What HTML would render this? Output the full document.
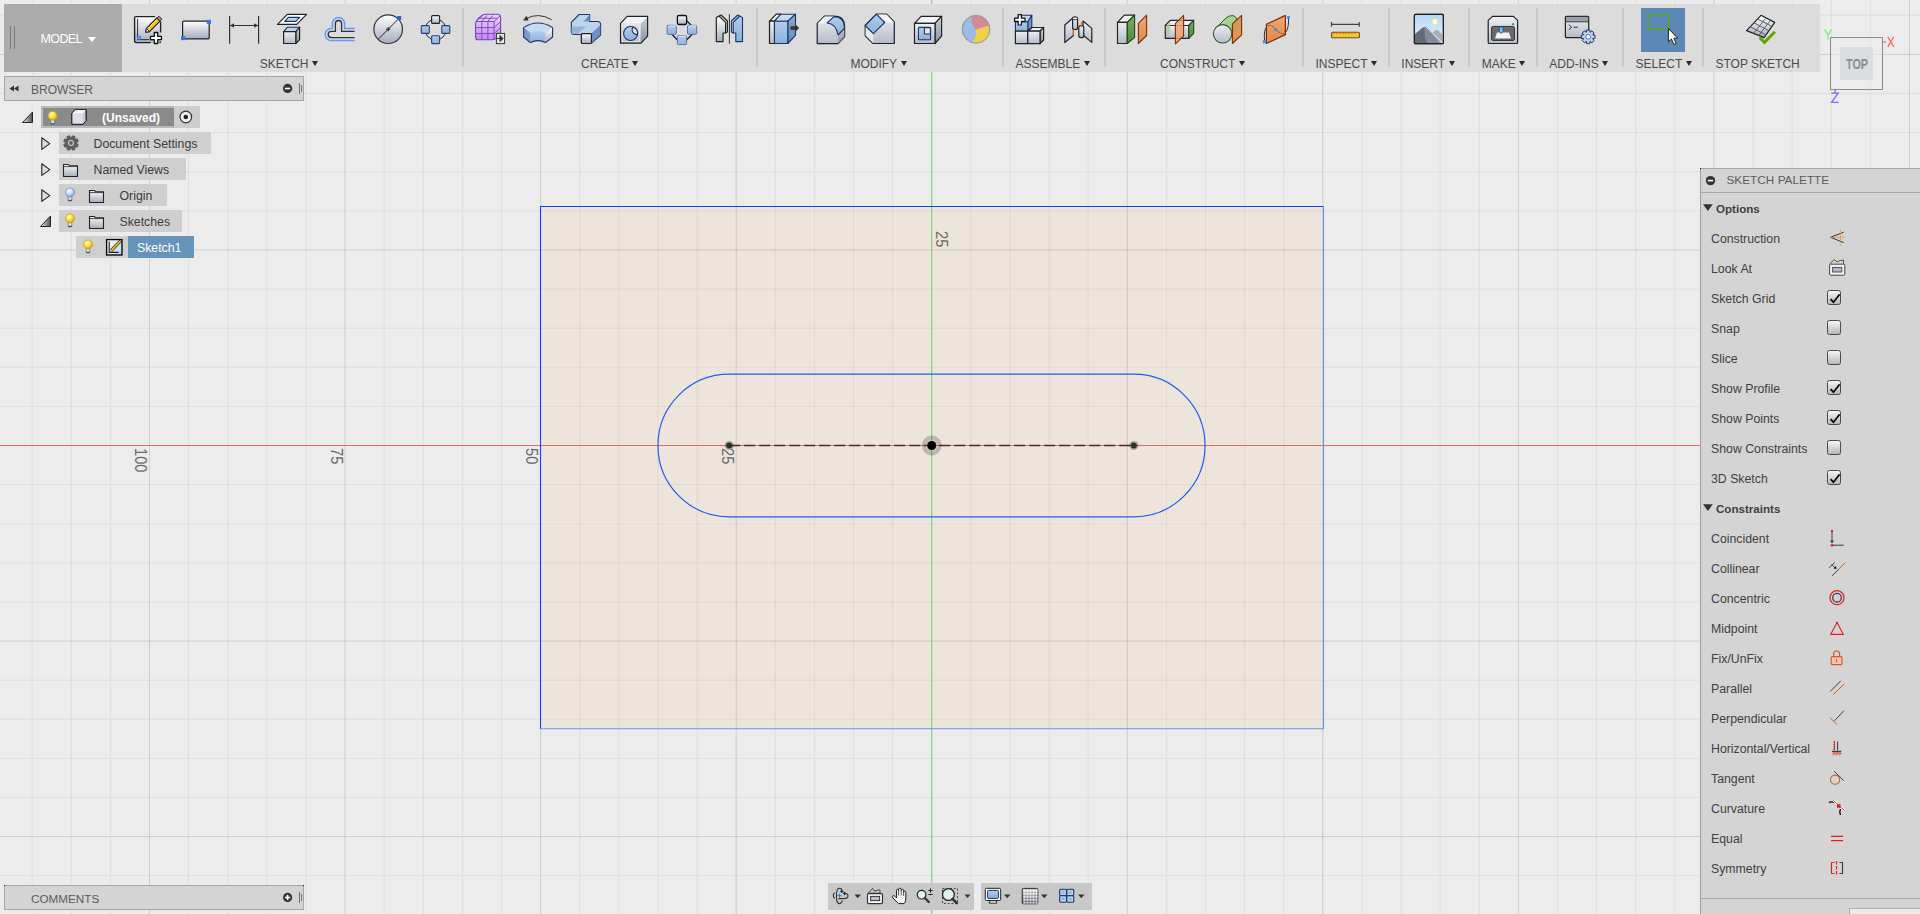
<!DOCTYPE html><html><head><meta charset="utf-8"><style>
*{box-sizing:border-box}
body{margin:0;width:1920px;height:914px;overflow:hidden;background:#ececec;position:relative;font-family:"Liberation Sans",sans-serif;}
.a{position:absolute}
.lbl{transform-origin:0 0;transform:rotate(90deg) scaleX(0.86);font-size:17px;line-height:17px;color:#6a6a6a;white-space:nowrap}
.tb{left:4px;top:4px;width:1816px;height:68px;background:#dcdcdc}
.model{left:4px;top:4px;width:118px;height:68px;background:#acacac}
.sep{width:2px;background:#c8c8c8;top:8px;height:59px}
.glab{font-size:12px;color:#4a4a4a;white-space:nowrap;top:57px;line-height:14px}
.tri{display:inline-block;width:0;height:0;border-left:3.7px solid transparent;border-right:3.7px solid transparent;border-top:5.2px solid #2a2a2a;vertical-align:2.4px;margin-left:3.6px}
.hdr{background:#d4d4d4;border:1px solid #a6a6a6}
.row{background:#cfcfcf;height:22px}
.rt{font-size:12px;color:#3c3c3c;white-space:nowrap;line-height:14px}
.pal{left:1700px;top:168px;width:220px;height:746px;background:#d4d4d4;border-left:1px solid #a0a0a0;border-top:1px solid #a6a6a6}
.pt{font-size:12.3px;color:#404040;white-space:nowrap;line-height:14px;left:1711px}
.cb{left:1827px;width:14px;height:14.5px;border:1px solid #4a4a4a;border-radius:2.5px;background:linear-gradient(#f6f6f6,#b8b8b8)}
.nav{background:#c8c8c8;top:883px;height:27px}
</style></head><body>
<svg class="a" style="left:0;top:0" width="1920" height="914"><rect x="0" y="0" width="1920" height="914" fill="#ececec"/>
<rect x="540.5" y="206.5" width="783" height="522" fill="#ede5db"/>
<path d="M32.17 0V914 M71.28 0V914 M110.39 0V914 M188.61 0V914 M227.72 0V914 M266.83 0V914 M305.94 0V914 M384.16 0V914 M423.27 0V914 M462.38 0V914 M501.49 0V914 M0 15.29H1920 M579.71 0V914 M0 93.51H1920 M618.82 0V914 M0 132.62H1920 M657.93 0V914 M0 171.73H1920 M697.04 0V914 M0 210.84H1920 M775.26 0V914 M0 289.06H1920 M814.37 0V914 M0 328.17H1920 M853.48 0V914 M0 367.28H1920 M892.59 0V914 M0 406.39H1920 M970.81 0V914 M0 484.61H1920 M1009.92 0V914 M0 523.72H1920 M1049.03 0V914 M0 562.83H1920 M1088.14 0V914 M0 601.94H1920 M1166.36 0V914 M0 680.16H1920 M1205.47 0V914 M0 719.27H1920 M1244.58 0V914 M0 758.38H1920 M1283.69 0V914 M0 797.49H1920 M1361.91 0V914 M0 875.71H1920 M1401.02 0V914 M0 914.82H1920 M1440.13 0V914 M1479.24 0V914 M1557.46 0V914 M1596.57 0V914 M1635.68 0V914 M1674.79 0V914 M1753.01 0V914 M1792.12 0V914 M1831.23 0V914 M1870.34 0V914" stroke="#000" stroke-opacity="0.055" stroke-width="1" fill="none"/>
<path d="M149.50 0V914 M345.05 0V914 M540.60 0V914 M0 54.40H1920 M736.15 0V914 M0 249.95H1920 M931.70 0V914 M0 445.50H1920 M1127.25 0V914 M0 641.05H1920 M1322.80 0V914 M0 836.60H1920 M1518.35 0V914 M1713.90 0V914 M1909.45 0V914" stroke="#000" stroke-opacity="0.13" stroke-width="1" fill="none"/>
<path d="M0 445.5H1920" stroke="#e86868" stroke-width="1" fill="none"/>
<path d="M931.7 0V914" stroke="#70dc69" stroke-width="1" fill="none"/>
<path d="M1323.5 206.5V728.8H540.5" fill="none" stroke="#6494f4" stroke-width="1.1"/>
<path d="M540.5 728.8V206.5H1323.5" fill="none" stroke="#0a46ff" stroke-width="1.1"/>
<path d="M729.2 374.2H1133.8A71.3 71.3 0 0 1 1133.8 516.8H729.2A71.3 71.3 0 0 1 729.2 374.2Z" fill="none" stroke="#1e5cf5" stroke-width="1.2"/>
<path d="M729.2 445.5H1133.8" stroke="#4a2a22" stroke-width="1.6" stroke-dasharray="11 4" fill="none"/>
<circle cx="729.2" cy="445.5" r="4.6" fill="#000" fill-opacity="0.28"/><circle cx="729.2" cy="445.5" r="3" fill="#303030"/>
<circle cx="1133.8" cy="445.5" r="4.6" fill="#000" fill-opacity="0.28"/><circle cx="1133.8" cy="445.5" r="3" fill="#303030"/>
<circle cx="931.7" cy="445.5" r="10" fill="#000" fill-opacity="0.2"/><circle cx="931.7" cy="445.5" r="6" fill="#fff" fill-opacity="0.2"/><circle cx="931.7" cy="445.5" r="4.5" fill="#000"/></svg>
<div class="a lbl" style="left:149px;top:448px">100</div>
<div class="a lbl" style="left:344.5px;top:448px">75</div>
<div class="a lbl" style="left:540px;top:448px">50</div>
<div class="a lbl" style="left:735.5px;top:448px">25</div>
<div class="a lbl" style="left:950px;top:230.5px">25</div>
<div class="a tb"></div>
<div class="a model"><div class="a" style="left:6px;top:22px;width:1px;height:23px;background:#7c7c7c"></div><div class="a" style="left:10px;top:22px;width:1px;height:23px;background:#7c7c7c"></div><div class="a" style="left:36.5px;top:28px;font-size:12.5px;letter-spacing:-0.6px;color:#fff;line-height:14px">MODEL</div><div class="a tri" style="left:83.5px;top:32.5px;margin:0;border-top-color:#fff;border-left-width:4px;border-right-width:4px;border-top-width:5.5px"></div></div>
<div class="a sep" style="left:462px"></div>
<div class="a sep" style="left:756px"></div>
<div class="a sep" style="left:1002px"></div>
<div class="a sep" style="left:1104px"></div>
<div class="a sep" style="left:1302px"></div>
<div class="a sep" style="left:1388px"></div>
<div class="a sep" style="left:1468px"></div>
<div class="a sep" style="left:1536px"></div>
<div class="a sep" style="left:1622px"></div>
<div class="a sep" style="left:1702px"></div>
<div class="a glab" style="left:259.8px">SKETCH<span class="tri"></span></div>
<div class="a glab" style="left:581.0px">CREATE<span class="tri"></span></div>
<div class="a glab" style="left:850.4px">MODIFY<span class="tri"></span></div>
<div class="a glab" style="left:1015.5px">ASSEMBLE<span class="tri"></span></div>
<div class="a glab" style="left:1160.0px">CONSTRUCT<span class="tri"></span></div>
<div class="a glab" style="left:1315.5px">INSPECT<span class="tri"></span></div>
<div class="a glab" style="left:1401.3px">INSERT<span class="tri"></span></div>
<div class="a glab" style="left:1481.8px">MAKE<span class="tri"></span></div>
<div class="a glab" style="left:1549.3px">ADD-INS<span class="tri"></span></div>
<div class="a glab" style="left:1635.6px">SELECT<span class="tri"></span></div>
<div class="a glab" style="left:1715.5px">STOP SKETCH</div>
<div class="a" style="left:1641px;top:8px;width:44px;height:44px;background:#5b88b4"></div>
<svg class="a" style="left:0;top:0" width="1920" height="80"><defs>
<linearGradient id="gw" x1="0" y1="0" x2="0" y2="1"><stop offset="0" stop-color="#ffffff"/><stop offset="1" stop-color="#a4acbc"/></linearGradient>
<linearGradient id="gw2" x1="0" y1="0" x2="0" y2="1"><stop offset="0" stop-color="#eef0f4"/><stop offset="1" stop-color="#b4bac8"/></linearGradient>
<linearGradient id="gside" x1="0" y1="0" x2="0" y2="1"><stop offset="0" stop-color="#c8ccd4"/><stop offset="1" stop-color="#8a94a4"/></linearGradient>
<linearGradient id="gblue" x1="0" y1="0" x2="0" y2="1"><stop offset="0" stop-color="#b4cdec"/><stop offset="1" stop-color="#8cb0dc"/></linearGradient>
<linearGradient id="gbluedk" x1="0" y1="0" x2="0" y2="1"><stop offset="0" stop-color="#8aa8d4"/><stop offset="1" stop-color="#6a8cc0"/></linearGradient>
<linearGradient id="gpur" x1="0" y1="0" x2="0" y2="1"><stop offset="0" stop-color="#ead8f8"/><stop offset="1" stop-color="#c488f0"/></linearGradient>
<linearGradient id="ggreen" x1="0" y1="0" x2="0" y2="1"><stop offset="0" stop-color="#7ab060"/><stop offset="1" stop-color="#4a8a38"/></linearGradient>
<linearGradient id="gorange" x1="0" y1="0" x2="0" y2="1"><stop offset="0" stop-color="#f0a870"/><stop offset="1" stop-color="#e0884a"/></linearGradient>
<linearGradient id="gsky" x1="0" y1="0" x2="0" y2="1"><stop offset="0" stop-color="#b4d8f2"/><stop offset="1" stop-color="#eaf6fc"/></linearGradient>
<linearGradient id="gdk" x1="0" y1="0" x2="0" y2="1"><stop offset="0" stop-color="#b8b8b8"/><stop offset="1" stop-color="#5a6270"/></linearGradient>
<linearGradient id="gcb" x1="0" y1="0" x2="0" y2="1"><stop offset="0" stop-color="#f4f4f4"/><stop offset="1" stop-color="#c0c0c0"/></linearGradient>
<radialGradient id="gbulb" cx="0.4" cy="0.35" r="0.6"><stop offset="0" stop-color="#fffbd0"/><stop offset="0.6" stop-color="#f8e040"/><stop offset="1" stop-color="#d8b010"/></radialGradient>
<radialGradient id="gbulbb" cx="0.4" cy="0.35" r="0.6"><stop offset="0" stop-color="#ffffff"/><stop offset="0.6" stop-color="#c4d8f8"/><stop offset="1" stop-color="#8aacdc"/></radialGradient>
<linearGradient id="gtri" x1="0" y1="0" x2="1" y2="0"><stop offset="0" stop-color="#f0f0f0"/><stop offset="1" stop-color="#505050"/></linearGradient>
</defs><rect x="134.6" y="16.6" width="26" height="26" rx="1.5" fill="url(#gw)"/><path d="M155.2 16.6H136.1Q134.6 16.6 134.6 18.1V41.1Q134.6 42.6 136.1 42.6H150.8M160.6 21.6V32.6M159.4 42.6Q160.6 42.6 160.6 41.4" stroke="#222" stroke-width="1.4" fill="none"/><path d="M137.6 19V39.6H149" stroke="#333" stroke-width="1" fill="none"/><rect x="137.2" y="36.2" width="3.4" height="3.4" fill="#5aa0ff" stroke="#2a6ac0" stroke-width="0.6"/><path d="M146.4 28.4L156.8 18L160 21.2L149.6 31.6L145.8 32.2Z" fill="#f7c400" stroke="#1a1a1a" stroke-width="1.1" stroke-linejoin="round"/><path d="M147.8 28.6L157.6 18.8" stroke="#fff6c0" stroke-width="0.8"/><path d="M156.8 18L158.2 16.6Q158.8 16 159.4 16.6L161.4 18.6Q162 19.2 161.4 19.8L160 21.2Z" fill="#d08050" stroke="#1a1a1a" stroke-width="0.9"/><path d="M146.4 28.4L149.6 31.6L145.8 32.2Z" fill="#fff" stroke="#1a1a1a" stroke-width="0.9" stroke-linejoin="round"/><path d="M154.3 32.5h3.4v3.8h3.8v3.4h-3.8v3.8h-3.4v-3.8h-3.8v-3.4h3.8z" fill="#fff" stroke="#111" stroke-width="1.3" stroke-linejoin="round"/><rect x="182.6" y="21.2" width="26.6" height="17.6" rx="1" fill="url(#gw)" stroke="#222" stroke-width="1.2" stroke-linejoin="round" stroke-width="1.4"/><rect x="206.8" y="19.8" width="4.2" height="4.2" fill="#3a78e0"/><rect x="181" y="36" width="4.2" height="4.2" fill="#3a78e0"/><path d="M229.6 16V43.8M258.6 16V43.8M230 25.5H258" stroke="#333" stroke-width="1.2" fill="none"/><path d="M230 25.5L234 23.2V27.8ZM258.2 25.5L254.2 23.2V27.8Z" fill="#333"/><path d="M277.5 24.4L287.3 14.4H306.6L296.7 24.4Z" fill="#fff" stroke="#222" stroke-width="1.2" stroke-linejoin="round"/><path d="M284.7 21.4L288.4 17.4H299.6L295.8 21.4Z" fill="#bcd4ee" stroke="#1a3468" stroke-width="1.1" stroke-linejoin="round"/><path d="M283.6 31.7L287.3 27.3H299.6L295.8 31.7Z" fill="#bcd4ee" stroke="#1a3468" stroke-width="1.1" stroke-linejoin="round"/><path d="M295.8 31.7L299.6 27.3V39.7L295.8 43.5Z" fill="url(#gside)" stroke="#222" stroke-width="1.2" stroke-linejoin="round"/><rect x="283.6" y="31.7" width="12.2" height="11.8" fill="url(#gw2)" stroke="#222" stroke-width="1.2" stroke-linejoin="round"/><path d="M354.7 28.6H344.6V23.6A6.1 6.1 0 0 0 332.4 23.6V28.4H331.3A6.1 6.1 0 0 0 331.3 40.6H354.7" stroke="#5a9cff" stroke-width="1.5" fill="none"/><path d="M354.7 31.4H341.6V23.6A3.1 3.1 0 0 0 335.4 23.6V31.4H331.3A3.1 3.1 0 0 0 331.3 37.6H354.7" stroke="#333" stroke-width="1.3" fill="none"/><circle cx="388.2" cy="29.2" r="14.3" fill="url(#gw)" stroke="#333" stroke-width="1.2"/><path d="M378 39.4L399 18.4M386 29.2h4.4M388.2 27v4.4" stroke="#222" stroke-width="1" fill="none"/><rect x="397.2" y="16" width="4" height="4" fill="#2a60d8"/><circle cx="435.6" cy="29.6" r="10.5" fill="none" stroke="#333" stroke-width="1"/><rect x="431.6" y="15.6" width="8" height="7.8" rx="1" fill="url(#gw)" stroke="#223" stroke-width="1.1"/><rect x="421.3" y="25.6" width="8" height="7.8" rx="1" fill="url(#gblue)" stroke="#23407a" stroke-width="1.1"/><rect x="441.8" y="25.6" width="8" height="7.8" rx="1" fill="url(#gblue)" stroke="#23407a" stroke-width="1.1"/><rect x="431.6" y="35.8" width="8" height="7.8" rx="1" fill="url(#gblue)" stroke="#23407a" stroke-width="1.1"/><path d="M478 39.8Q475.6 39.8 475.6 37V24Q475.6 21.5 478 19L482 15.5Q483.5 14.2 486 14.2H497Q500.6 14.2 500.6 18V31.5Q500.6 34 498 36.5L496 38.5Q494.8 39.8 492.5 39.8Z" fill="url(#gpur)" stroke="#7a3ec0" stroke-width="1.1"/><path d="M475.8 21.5H494V39.6M494 21.5L500.4 15.5M481.8 21.5V39.6M487.9 21.5V39.6M475.8 27.6H494M475.8 33.6H494M481.5 21.5L487 15.5M487.6 21.5L493 15.5M478 18.2H497.5M494 27.6L500.4 21.8M494 33.6L500.4 28" stroke="#7a3ec0" stroke-width="0.9" fill="none"/><rect x="496.4" y="33.4" width="8.2" height="10.2" fill="#e8e8e8" stroke="#333" stroke-width="1"/><path d="M497 38.5H500.5M500 35.5L503 38.5L500 41.5Z" stroke="#333" stroke-width="1" fill="#333"/><path d="M551.6 19.6Q538 12 526.5 18.6" stroke="#333" stroke-width="1" fill="none"/><path d="M523 20.6L526.5 15.8L528.6 20.6Z" fill="#333"/><path d="M523.6 27.6Q538 18.5 552.6 27.6L545.6 33Q538 29 530.4 33Z" fill="#c8dcf0"/><path d="M530.4 33Q538 29 545.6 33V42.6Q538 38.6 530.4 42.6Z" fill="url(#gblue)"/><path d="M523.6 27.6L530.4 33V42.6L523.6 37Z" fill="#7c9ccc"/><path d="M545.6 33L552.6 27.6V37L545.6 42.6Z" fill="url(#gw)"/><path d="M523.6 27.6Q538 18.5 552.6 27.6V37L545.6 42.6Q538 38.6 530.4 42.6L523.6 37Z" fill="none" stroke="#1a3468" stroke-width="1.1" stroke-linejoin="round" stroke-width="1.2"/><path d="M579.1 14.5H589.6V21.5H597.5Q600.6 21.5 600.6 24.5V35L591.8 42.8H581.4V34.5H574.6Q571.3 34.5 571.3 31.5V22.3Z" fill="#bcd4ee" stroke="#1a3468" stroke-width="1.1" stroke-linejoin="round" stroke-width="1.2"/><path d="M589.6 14.8V21.5H583.5Z" fill="#6f90c4"/><path d="M600.3 25L591.4 33.6V42.6L600.3 35Z" fill="#6f90c4"/><path d="M571.6 26.5H586L578 33.8H571.6Z" fill="#94b4dc"/><rect x="581.4" y="33.6" width="10" height="9.9" rx="0.8" fill="url(#gw)" stroke="#222" stroke-width="1.2" stroke-linejoin="round"/><path d="M620.5 23.3L627.2 16.3H647.6V36.2L641 43.2H620.5Z" fill="url(#gw2)"/><path d="M621 23.3L627.5 16.8H647L640.8 23.3Z" fill="#f3f4f7"/><path d="M641 23.5L647.2 17V36L641 42.8Z" fill="url(#gside)"/><rect x="622.2" y="24.9" width="17.2" height="16.8" fill="none" stroke="#e6e9ef" stroke-width="0.9"/><path d="M620.5 23.3L627.2 16.3H647.6V36.2L641 43.2H620.5Z" fill="none" stroke="#222" stroke-width="1.2" stroke-linejoin="round" stroke-width="1.3"/><circle cx="630.6" cy="33.5" r="7" fill="url(#gblue)" stroke="#1a3468" stroke-width="1.1" stroke-linejoin="round" stroke-width="1"/><path d="M633.2 27A7 7 0 0 1 637.5 34.6Q633.6 34.6 632.2 31Q631.6 28.4 633.2 27Z" fill="#e6e4e0" stroke="#1a3468" stroke-width="1.1" stroke-linejoin="round" stroke-width="0.9"/><path d="M685.5 19.5L692.5 26.5M671.5 34L678.5 41M692.5 34L685.5 41" stroke="#1a1a1a" stroke-width="1.3" fill="none"/><rect x="677.4" y="15.5" width="9.2" height="9" rx="1.4" fill="url(#gw)" stroke="#111" stroke-width="1.3"/><rect x="667.1" y="25.3" width="9.2" height="9" rx="1" fill="url(#gblue)" stroke="#5676a8" stroke-width="1"/><path d="M668.1 26.900000000000002L669.7 25.900000000000002H675.7" stroke="#e4eef8" stroke-width="1" fill="none"/><rect x="687.5" y="25.3" width="9.2" height="9" rx="1" fill="url(#gblue)" stroke="#5676a8" stroke-width="1"/><path d="M688.5 26.900000000000002L690.1 25.900000000000002H696.1" stroke="#e4eef8" stroke-width="1" fill="none"/><rect x="677.4" y="35.6" width="9.2" height="9" rx="1" fill="url(#gblue)" stroke="#5676a8" stroke-width="1"/><path d="M678.4 37.2L680.0 36.2H686.0" stroke="#e4eef8" stroke-width="1" fill="none"/><path d="M729.4 14.2V43.7" stroke="#333" stroke-width="1" fill="none"/><path d="M719 16L721 15L727.4 21V32L725 33" fill="#e4e7ee" stroke="#222" stroke-width="1.2" stroke-linejoin="round" stroke-width="1"/><path d="M716.3 17.6L719 16L725.6 22.4V33H723V41.6H716.3Z" fill="url(#gw)" stroke="#222" stroke-width="1.2" stroke-linejoin="round" stroke-width="1.1"/><path d="M739.8 16L737.8 15L731.4 21V32L733.6 33" fill="#c4d8f0" stroke="#1a3468" stroke-width="1.1" stroke-linejoin="round" stroke-width="1"/><path d="M742.5 17.6L739.8 16L733.2 22.4V33H735.8V41.6H742.5Z" fill="url(#gblue)" stroke="#1a3468" stroke-width="1.1" stroke-linejoin="round"/><path d="M769.5 21.2L776.2 14.2H781L774.5 21.2Z" fill="#f4f4f6" stroke="#222" stroke-width="1.2" stroke-linejoin="round"/><rect x="769.5" y="21.2" width="5" height="22.3" fill="url(#gw2)" stroke="#222" stroke-width="1.2" stroke-linejoin="round"/><path d="M774.5 21.2L780.8 14.2H795.5L787.8 21.2Z" fill="#c8dcf0" stroke="#1a3468" stroke-width="1.1" stroke-linejoin="round" stroke-width="1.2"/><path d="M787.8 21.2L795.5 14.2V35.4L787.8 43.5Z" fill="url(#gbluedk)" stroke="#1a3468" stroke-width="1.1" stroke-linejoin="round" stroke-width="1.2"/><rect x="774.5" y="21.2" width="13.3" height="22.3" fill="url(#gblue)" stroke="#1a3468" stroke-width="1.1" stroke-linejoin="round" stroke-width="1.2"/><path d="M790.6 26.2H795V23.9L799.2 28L795 32V29.7H790.6Z" fill="#333"/><path d="M817.2 23.4L824.4 16.2H834Q844.6 16.2 844.6 27V36.6L838 43.6H817.2Z" fill="url(#gw2)" stroke="#222" stroke-width="1.2" stroke-linejoin="round" stroke-width="1.3"/><path d="M817.6 23.4L824.6 16.6H834L827 23.4Z" fill="#f3f4f6"/><path d="M838 35L844.3 28.5V36.6L838 43.3Z" fill="url(#gside)"/><path d="M827 23Q836 23.5 838 35L844.3 28.5V27Q844 16.6 834 16.6Z" fill="url(#gblue)" stroke="#1a3468" stroke-width="1.1" stroke-linejoin="round" stroke-width="1.1"/><path d="M865.2 25.5L876.4 14.2H886.7L894.3 21.8V43.5H873.1L865.2 35.8Z" fill="url(#gw2)" stroke="#222" stroke-width="1.2" stroke-linejoin="round" stroke-width="1.3"/><path d="M876.4 14.6H886.5L893.8 22.2H884.7Z" fill="#f3f4f6"/><path d="M865.6 26L873.3 33.8V43.2L865.6 35.6Z" fill="#e6e8ee"/><path d="M865.2 25.5L876.4 14.2L884.7 22.5L873.3 33.7Z" fill="url(#gblue)" stroke="#1a3468" stroke-width="1.1" stroke-linejoin="round"/><path d="M914.5 23.3L921.2 16.3H941.6L935 23.3Z" fill="#f2f3f6" stroke="#222" stroke-width="1.2" stroke-linejoin="round"/><path d="M935 23.3L941.6 16.3V36.2L935 43.5Z" fill="url(#gside)" stroke="#222" stroke-width="1.2" stroke-linejoin="round"/><rect x="914.5" y="23.3" width="20.5" height="20.2" fill="url(#gw2)" stroke="#222" stroke-width="1.2" stroke-linejoin="round"/><rect x="918.4" y="27.4" width="12.2" height="12.3" rx="1" fill="url(#gblue)" stroke="#1a3468" stroke-width="1.1" stroke-linejoin="round" stroke-width="1.2"/><path d="M924.4 27.6V34H930.4V27.6Z" fill="#e6e4e0" stroke="#1a3468" stroke-width="1.1" stroke-linejoin="round"/><circle cx="976" cy="29.3" r="13.8" fill="#9cbce8" stroke="#9a9a9a" stroke-width="1"/><path d="M971.7 15.8A13.8 13.8 0 0 1 989.4 25.6L975.6 29.7Q970 22 971.7 15.8Z" fill="#d68a96"/><path d="M975.6 29.7L989.4 25.6A13.8 13.8 0 0 1 971.8 42.5Q978 36 975.6 29.7Z" fill="#f0d248"/><circle cx="976" cy="29.3" r="13.8" fill="none" stroke="#9a9a9a" stroke-width="1"/><path d="M1015.4 22L1019.2 15.2H1031.8L1027.8 22Z" fill="#c8dcf0" stroke="#1a3468" stroke-width="1.1" stroke-linejoin="round"/><path d="M1027.8 22L1031.8 15.2V27.5L1027.8 31.2Z" fill="url(#gbluedk)" stroke="#1a3468" stroke-width="1.1" stroke-linejoin="round"/><rect x="1015.4" y="22" width="12.4" height="9.2" fill="url(#gblue)" stroke="#1a3468" stroke-width="1.1" stroke-linejoin="round"/><path d="M1028 31.2L1032 27.5H1043.6L1040 31.2Z" fill="#f0f1f4" stroke="#222" stroke-width="1.2" stroke-linejoin="round"/><path d="M1040 31.2L1043.6 27.5V40L1040 43.7Z" fill="url(#gside)" stroke="#222" stroke-width="1.2" stroke-linejoin="round"/><rect x="1015.4" y="31.2" width="12.4" height="12.5" fill="url(#gw2)" stroke="#222" stroke-width="1.2" stroke-linejoin="round"/><rect x="1027.8" y="31.2" width="12.2" height="12.5" fill="url(#gw2)" stroke="#222" stroke-width="1.2" stroke-linejoin="round"/><path d="M1018.2 14.6h3.2v3.6h3.6v3.2h-3.6v3.6h-3.2v-3.6h-3.6v-3.2h3.6z" fill="#fff" stroke="#111" stroke-width="1.2"/><path d="M1064.8 25L1073.4 17.5V35.5L1064.8 42.5Z" fill="url(#gw2)" stroke="#222" stroke-width="1.2" stroke-linejoin="round" stroke-width="1.1"/><rect x="1072.6" y="17" width="5" height="12.5" rx="2" fill="url(#gw2)" stroke="#222" stroke-width="1.2" stroke-linejoin="round" stroke-width="1"/><ellipse cx="1075.1" cy="18.4" rx="2.5" ry="1.4" fill="#fff" stroke="#222" stroke-width="0.8"/><path d="M1083 21L1091.8 28.4V42.4L1083 35Z" fill="url(#gw2)" stroke="#222" stroke-width="1.2" stroke-linejoin="round" stroke-width="1.1"/><rect x="1078.8" y="25.6" width="5" height="12" rx="2" fill="url(#gw2)" stroke="#222" stroke-width="1.2" stroke-linejoin="round" stroke-width="1"/><path d="M1073.6 29.5V35.2M1081.4 21.6V27.4" stroke="#f07010" stroke-width="1" fill="none"/><path d="M1117.5 22.4L1124.3 15.2H1134.6L1127.3 22.4Z" fill="#f4f4f6" stroke="#222" stroke-width="1.2" stroke-linejoin="round"/><rect x="1117.5" y="22.4" width="9.8" height="21.1" fill="url(#gw2)" stroke="#222" stroke-width="1.2" stroke-linejoin="round"/><path d="M1127.3 22.4L1134.6 15.2V37.4L1127.3 43.5Z" fill="url(#ggreen)" stroke="#1e4a1a" stroke-width="1.1" stroke-linejoin="round"/><path d="M1138.4 23.4L1146.6 15.2V35.5L1138.4 43.5Z" fill="url(#gorange)" stroke="#7a2e08" stroke-width="1.1" stroke-linejoin="round"/><path d="M1165.3 25.5L1170.2 20.3H1193.7L1188.8 25.5Z" fill="#f4f4f6" stroke="#222" stroke-width="1.2" stroke-linejoin="round"/><rect x="1165.3" y="25.5" width="23.5" height="12.9" fill="url(#gw2)" stroke="#222" stroke-width="1.2" stroke-linejoin="round"/><path d="M1165.8 26L1170.2 21.2V33.2L1166 37.8Z" fill="#a8cc98" opacity="0.8"/><path d="M1188.8 25.5L1193.7 20.3V33.3L1188.8 38.4Z" fill="url(#ggreen)" stroke="#1e4a1a" stroke-width="1.1" stroke-linejoin="round"/><path d="M1175.4 23.4L1183.6 15.4V35.8L1175.4 43.8Z" fill="#eca070" fill-opacity="0.85" stroke="#7a2e08" stroke-width="1.1" stroke-linejoin="round"/><path d="M1216.5 27.5L1226 18Q1229.5 15 1233 15.6Q1238 16.5 1236 24L1230 38Q1225 43.6 1218 41Z" fill="#a8d090" stroke="#2a6020" stroke-width="1"/><circle cx="1222.6" cy="33.8" r="9.2" fill="url(#gw2)" stroke="#2a6020" stroke-width="1.1"/><path d="M1232.4 24L1241.6 15.4V34.8L1232.4 43.5Z" fill="url(#gorange)" stroke="#7a2e08" stroke-width="1.1" stroke-linejoin="round"/><path d="M1233 24.2L1241 17V27L1233 34.5Z" fill="#c89858" opacity="0.8"/><path d="M1264.5 40.5Q1263.5 30 1267 26.5M1288.5 18.5Q1289 28 1285.5 32.5" stroke="#333" stroke-width="1" fill="none"/><path d="M1266.4 24.3L1285.4 15.4V34.6L1266.4 43.5Z" fill="url(#gorange)" stroke="#7a2e08" stroke-width="1.2" stroke-linejoin="round"/><path d="M1267.5 25.5Q1272 24.5 1275.5 29Q1280 34 1285 34" stroke="#333" stroke-width="0.8" stroke-dasharray="1.5 0.8" fill="none"/><rect x="1262.9" y="40" width="3.2" height="3.4" fill="#4a90f0"/><rect x="1287" y="15.9" width="3" height="3" fill="#4a90f0"/><rect x="1274" y="28" width="3" height="3" fill="#4a90f0"/><path d="M1331.5 24.3H1359.3M1331.5 22V26.8M1359.3 22V26.8" stroke="#444" stroke-width="1.2" fill="none"/><rect x="1331.6" y="32.2" width="27.8" height="5.6" rx="1" fill="#f0c838" stroke="#8a4800" stroke-width="1.1"/><path d="M1334 32.6v1.6M1337 32.6v1.6M1340 32.6v1.6M1343 32.6v1.6M1346 32.6v1.6M1349 32.6v1.6M1352 32.6v1.6M1355 32.6v1.6" stroke="#a86800" stroke-width="0.8"/><rect x="1414.4" y="14.4" width="29" height="29.3" rx="1" fill="url(#gsky)" stroke="#222" stroke-width="1.2" stroke-linejoin="round"/><path d="M1415 36L1423.5 27.5Q1426 25.5 1428 28L1442.8 43.2H1415Z" fill="#858c98"/><path d="M1415 34L1422 28Q1424.5 26.5 1424.5 30Q1424.5 36 1426 40.5L1427.8 43.2H1415Z" fill="#636a78"/><path d="M1432 33L1435.5 30Q1437.5 29 1439 31L1442.8 35V43.2H1440Z" fill="#a6afba"/><path d="M1425.5 26.5L1442.8 43" stroke="#fff" stroke-width="0.8" fill="none"/><circle cx="1435" cy="21.8" r="2.8" fill="#fff" stroke="#f8e080" stroke-width="1"/><rect x="1414.4" y="14.4" width="29" height="29.3" rx="1" fill="none" stroke="#222" stroke-width="1.2" stroke-linejoin="round" stroke-width="1.3"/><path d="M1492.5 16.4H1513.4L1517.6 20.4V42.4Q1517.6 43.5 1516.5 43.5H1489.2Q1488.2 43.5 1488.2 42.4V20.4Z" fill="url(#gw2)" stroke="#222" stroke-width="1.2" stroke-linejoin="round"/><rect x="1491.6" y="26.4" width="22.8" height="14" rx="1.5" fill="#6a6a6a" stroke="#333" stroke-width="1"/><path d="M1495 38.5L1497 32.5H1509L1511 38.5Z" fill="#f4f4f4"/><path d="M1499.4 27V31.5L1501.2 33.5L1503 31.5V27Z" fill="#8ac0e8" stroke="#1a50c0" stroke-width="0.9"/><rect x="1512.2" y="23.2" width="1.8" height="1.8" fill="#10a010"/><rect x="1565.4" y="16.3" width="23.3" height="21.4" rx="1" fill="url(#gw2)" stroke="#222" stroke-width="1.2" stroke-linejoin="round"/><rect x="1566" y="16.9" width="22.1" height="4.4" fill="#9aa0aa"/><path d="M1565.6 21.8H1588.4" stroke="#333" stroke-width="1"/><path d="M1568.8 24.8L1571.8 27.2L1568.8 29.6M1573.6 27.2H1577.8" stroke="#333" stroke-width="1" fill="none"/><path d="M1595.03 35.27 L1595.03 38.33 L1592.77 38.84 L1592.87 38.59 L1594.11 40.55 L1591.95 42.71 L1589.99 41.47 L1590.24 41.37 L1589.73 43.63 L1586.67 43.63 L1586.16 41.37 L1586.41 41.47 L1584.45 42.71 L1582.29 40.55 L1583.53 38.59 L1583.63 38.84 L1581.37 38.33 L1581.37 35.27 L1583.63 34.76 L1583.53 35.01 L1582.29 33.05 L1584.45 30.89 L1586.41 32.13 L1586.16 32.23 L1586.67 29.97 L1589.73 29.97 L1590.24 32.23 L1589.99 32.13 L1591.95 30.89 L1594.11 33.05 L1592.87 35.01 L1592.77 34.76Z" fill="#b8d0ee" stroke="#1a3468" stroke-width="1"/><circle cx="1588.2" cy="36.8" r="2.4" fill="#fff" stroke="#1a3468" stroke-width="0.6"/><rect x="1648.2" y="14.6" width="20.4" height="14.2" fill="none" stroke="#5aaa10" stroke-width="1.3"/><path d="M1668.4 28.4V41.8L1671.4 39L1674 44.5L1676.2 43.4L1673.8 38.2H1677.6Z" fill="#fff" stroke="#111" stroke-width="0.9" stroke-linejoin="round"/><path d="M1746.6 30.6L1761 15.3L1774.7 22.4L1764.1 37.6Z" fill="url(#gw)" stroke="#222" stroke-width="1.2" stroke-linejoin="round" stroke-width="1.1"/><path d="M1750.2 26.8L1764.5 34.2M1754 22.8L1768 30.3M1757.5 19L1771.2 26M1765.5 18.5L1753 34M1770 20.8L1758.5 36" stroke="#555" stroke-width="0.9" fill="none"/><path d="M1759.6 37.5L1764.5 42.4L1775 31.8" stroke="#5aa800" stroke-width="3" fill="none"/></svg>
<div class="a hdr" style="left:4px;top:76px;width:300px;height:25px"></div>
<div class="a rt" style="left:31px;top:82.5px;font-size:12px;color:#5c5c5c">BROWSER</div>
<div class="a" style="left:41px;top:106px;width:159px;height:22px;background:#bababa"></div>
<div class="a" style="left:174px;top:106px;width:26px;height:22px;background:#cdcdcd"></div>
<div class="a" style="left:43px;top:108px;width:131px;height:18px;background:#8a8a8a"></div>
<div class="a rt" style="left:102px;top:111px;color:#fff;font-weight:bold">(Unsaved)</div>
<div class="a row" style="left:59px;top:132px;width:152px"></div>
<div class="a rt" style="left:93.5px;top:136.8px;font-size:12.3px">Document Settings</div>
<div class="a row" style="left:59px;top:158px;width:127px"></div>
<div class="a rt" style="left:93.5px;top:162.8px;font-size:12.3px">Named Views</div>
<div class="a row" style="left:59px;top:184px;width:108px"></div>
<div class="a rt" style="left:119.5px;top:188.8px;font-size:12.3px">Origin</div>
<div class="a row" style="left:59px;top:210px;width:123px"></div>
<div class="a rt" style="left:119.5px;top:214.8px;font-size:12.3px">Sketches</div>
<div class="a row" style="left:76px;top:236px;width:52px"></div>
<div class="a" style="left:128px;top:236px;width:66px;height:22px;background:#6593ba"></div>
<div class="a rt" style="left:137px;top:241px;color:#fff;font-size:12.3px">Sketch1</div>
<div class="a hdr" style="left:4px;top:885px;width:300px;height:25px"></div>
<div class="a rt" style="left:31px;top:891.5px;font-size:11.7px;color:#5c5c5c">COMMENTS</div>
<svg class="a" style="left:0;top:0;pointer-events:none" width="320" height="914"><path d="M22.5 122.5L32.5 112V122.5Z" fill="url(#gtri)" stroke="#222" stroke-width="1" stroke-linejoin="round"/><rect x="50.800000000000004" y="119.4" width="3.6" height="5" rx="0.6" fill="#e4e6ec" stroke="#6a7080" stroke-width="0.8"/><path d="M50.800000000000004 123.8H54.4" stroke="#4a5060" stroke-width="1.2"/><circle cx="52.6" cy="115.8" r="4.5" fill="url(#gbulb)" stroke="#c8a000" stroke-width="0.7"/><path d="M71.8 113.4L75 109.6H86.2V120.6L83 124.3H71.8Z" fill="#c8ccd4" stroke="#2a2e36" stroke-width="1" stroke-linejoin="round"/><path d="M72.2 113.6L75.2 110H85.8L82.8 113.6Z" fill="#fafafa"/><rect x="72.3" y="113.8" width="10.4" height="10" fill="#dde0e6"/><path d="M71.8 113.4L75 109.6H86.2V120.6L83 124.3H71.8Z" fill="none" stroke="#2a2e36" stroke-width="1" stroke-linejoin="round"/><circle cx="185.8" cy="117" r="5.8" fill="#f2f2f2" stroke="#333" stroke-width="1.2"/><circle cx="185.8" cy="117" r="2.3" fill="#222"/><path d="M41.8 137.8L49.8 143.6L41.8 149.4Z" fill="#dcdde2" stroke="#222" stroke-width="1.1" stroke-linejoin="round"/><path d="M41.8 163.8L49.8 169.6L41.8 175.4Z" fill="#dcdde2" stroke="#222" stroke-width="1.1" stroke-linejoin="round"/><path d="M41.8 189.8L49.8 195.6L41.8 201.4Z" fill="#dcdde2" stroke="#222" stroke-width="1.1" stroke-linejoin="round"/><path d="M40.5 226.5L50.5 216V226.5Z" fill="url(#gtri)" stroke="#222" stroke-width="1" stroke-linejoin="round"/><path d="M78.85 144.53 L77.64 147.47 L75.07 147.13 L75.13 147.07 L75.47 149.64 L72.53 150.85 L70.96 148.80 L71.04 148.80 L69.47 150.85 L66.53 149.64 L66.87 147.07 L66.93 147.13 L64.36 147.47 L63.15 144.53 L65.20 142.96 L65.20 143.04 L63.15 141.47 L64.36 138.53 L66.93 138.87 L66.87 138.93 L66.53 136.36 L69.47 135.15 L71.04 137.20 L70.96 137.20 L72.53 135.15 L75.47 136.36 L75.13 138.93 L75.07 138.87 L77.64 138.53 L78.85 141.47 L76.80 143.04 L76.80 142.96Z" fill="#5e5e5e"/><circle cx="71" cy="143" r="3" fill="#cfcfcf"/><circle cx="71" cy="143" r="1.9" fill="#5e5e5e"/><path d="M63.5 176.5V164.5H68.5L69.5 165.8H77.5V176.5Z" fill="url(#gw)" stroke="#222" stroke-width="1.1" stroke-linejoin="round"/><path d="M63.8 166.6H77.2" stroke="#222" stroke-width="0.8"/><rect x="68.2" y="196.0" width="3.6" height="5" rx="0.6" fill="#e4e6ec" stroke="#6a7080" stroke-width="0.8"/><path d="M68.2 200.4H71.8" stroke="#4a5060" stroke-width="1.2"/><circle cx="70" cy="192.4" r="4.5" fill="url(#gbulbb)" stroke="#6a8ac0" stroke-width="0.7"/><path d="M89.5 202.5V190.5H94.5L95.5 191.8H103.5V202.5Z" fill="url(#gw)" stroke="#222" stroke-width="1.1" stroke-linejoin="round"/><path d="M89.8 192.6H103.2" stroke="#222" stroke-width="0.8"/><rect x="68.2" y="222.0" width="3.6" height="5" rx="0.6" fill="#e4e6ec" stroke="#6a7080" stroke-width="0.8"/><path d="M68.2 226.4H71.8" stroke="#4a5060" stroke-width="1.2"/><circle cx="70" cy="218.4" r="4.5" fill="url(#gbulb)" stroke="#c8a000" stroke-width="0.7"/><path d="M89.5 228.5V216.5H94.5L95.5 217.8H103.5V228.5Z" fill="url(#gw)" stroke="#222" stroke-width="1.1" stroke-linejoin="round"/><path d="M89.8 218.6H103.2" stroke="#222" stroke-width="0.8"/><rect x="86.2" y="248.0" width="3.6" height="5" rx="0.6" fill="#e4e6ec" stroke="#6a7080" stroke-width="0.8"/><path d="M86.2 252.4H89.8" stroke="#4a5060" stroke-width="1.2"/><circle cx="88" cy="244.4" r="4.5" fill="url(#gbulb)" stroke="#c8a000" stroke-width="0.7"/><linearGradient id="gsk" x1="0" y1="0" x2="1" y2="1"><stop offset="0" stop-color="#ffffff"/><stop offset="1" stop-color="#b8d0f0"/></linearGradient><rect x="106.6" y="239.6" width="15.4" height="15.4" fill="url(#gsk)" stroke="#000" stroke-width="1.3"/><path d="M109.2 241.5V252.4H118.5" stroke="#1a1a2a" stroke-width="1.1" fill="none"/><path d="M111.2 250.6L120.6 240.8" stroke="#222" stroke-width="3"/><path d="M111.4 250.4L120.4 241" stroke="#f5c400" stroke-width="1.8"/><path d="M110.2 251.6L112.2 249.6" stroke="#e08a40" stroke-width="1.6"/><path d="M9.5 88.5L14 85.5V91.5ZM14 88.5L18.5 85.5V91.5Z" fill="#333"/><circle cx="287.6" cy="88.4" r="4.6" fill="#333"/><rect x="285" y="87.7" width="5.2" height="1.6" fill="#fff"/><path d="M299.5 83V94M301.6 85V92" stroke="#666" stroke-width="0.9"/><circle cx="287.6" cy="897.4" r="4.6" fill="#333"/><rect x="285" y="896.7" width="5.2" height="1.6" fill="#fff"/><rect x="286.8" y="894.8" width="1.6" height="5.2" fill="#fff"/><path d="M299.5 892V903M301.6 894V901" stroke="#666" stroke-width="0.9"/></svg>
<div class="a pal"></div>
<div class="a" style="left:1701px;top:192px;width:219px;height:1px;background:#a8a8a8"></div>
<div class="a rt" style="left:1726.5px;top:173px;font-size:11.8px;color:#5c5c5c">SKETCH PALETTE</div>
<div class="a" style="left:1716px;top:202px;font-size:11.6px;font-weight:bold;color:#404040;line-height:14px">Options</div>
<div class="a" style="left:1716px;top:502px;font-size:11.6px;font-weight:bold;color:#404040;line-height:14px">Constraints</div>
<div class="a pt" style="top:232px">Construction</div>
<div class="a pt" style="top:262px">Look At</div>
<div class="a pt" style="top:292px">Sketch Grid</div>
<div class="a pt" style="top:322px">Snap</div>
<div class="a pt" style="top:352px">Slice</div>
<div class="a pt" style="top:382px">Show Profile</div>
<div class="a pt" style="top:412px">Show Points</div>
<div class="a pt" style="top:442px">Show Constraints</div>
<div class="a pt" style="top:472px">3D Sketch</div>
<div class="a pt" style="top:532px">Coincident</div>
<div class="a pt" style="top:562px">Collinear</div>
<div class="a pt" style="top:592px">Concentric</div>
<div class="a pt" style="top:622px">Midpoint</div>
<div class="a pt" style="top:652px">Fix/UnFix</div>
<div class="a pt" style="top:682px">Parallel</div>
<div class="a pt" style="top:712px">Perpendicular</div>
<div class="a pt" style="top:742px">Horizontal/Vertical</div>
<div class="a pt" style="top:772px">Tangent</div>
<div class="a pt" style="top:802px">Curvature</div>
<div class="a pt" style="top:832px">Equal</div>
<div class="a pt" style="top:862px">Symmetry</div>
<div class="a cb" style="top:290px"><svg class="a" style="left:1px;top:1px" width="12" height="12"><path d="M1.6 7.2L4.4 10.2L10.6 2.4" stroke="#0a0a0a" stroke-width="1.7" fill="none"/></svg></div>
<div class="a cb" style="top:320px"></div>
<div class="a cb" style="top:350px"></div>
<div class="a cb" style="top:380px"><svg class="a" style="left:1px;top:1px" width="12" height="12"><path d="M1.6 7.2L4.4 10.2L10.6 2.4" stroke="#0a0a0a" stroke-width="1.7" fill="none"/></svg></div>
<div class="a cb" style="top:410px"><svg class="a" style="left:1px;top:1px" width="12" height="12"><path d="M1.6 7.2L4.4 10.2L10.6 2.4" stroke="#0a0a0a" stroke-width="1.7" fill="none"/></svg></div>
<div class="a cb" style="top:440px"></div>
<div class="a cb" style="top:470px"><svg class="a" style="left:1px;top:1px" width="12" height="12"><path d="M1.6 7.2L4.4 10.2L10.6 2.4" stroke="#0a0a0a" stroke-width="1.7" fill="none"/></svg></div>
<div class="a" style="left:1701px;top:898px;width:219px;height:1px;background:#a8a8a8"></div>
<div class="a" style="left:1849px;top:908px;width:71px;height:6px;background:#ebebeb;border-left:1px solid #b0b0b0;border-top:1px solid #b0b0b0"></div>
<svg class="a" style="left:0;top:0" width="1920" height="914"><circle cx="1710.5" cy="180.6" r="4.7" fill="#333"/><rect x="1707.8" y="179.8" width="5.4" height="1.6" fill="#fff"/><path d="M1703 204.2H1712.8L1707.9 211Z" fill="#333"/><path d="M1703 504.2H1712.8L1707.9 511Z" fill="#333"/><path d="M1843.7 232.2L1830.6 237.3L1843.7 242.6" stroke="#333" stroke-width="1" fill="none"/><path d="M1831 237.3H1845.5M1840.4 230V245" stroke="#f08000" stroke-width="1" stroke-dasharray="1.6 1.2" fill="none"/><path d="M1830 264L1834 259.5L1837 262L1840 260.5L1843.5 260V264" stroke="#444" stroke-width="0.9" fill="none"/><rect x="1829.6" y="264.2" width="15.2" height="11" rx="1" fill="#f4f4f4" stroke="#444" stroke-width="1"/><rect x="1832.6" y="267.4" width="9.2" height="4.6" fill="#b0b8c8" stroke="#444" stroke-width="0.9"/><path d="M1832 532V542.5M1832 545.2H1843.8" stroke="#3a4048" stroke-width="1" fill="none"/><path d="M1830 540.5L1832 543.5L1834 540.5Z" fill="#3a4048"/><circle cx="1832" cy="531" r="1.2" fill="#e02020"/><circle cx="1832" cy="545.2" r="1.3" fill="#e02020"/><path d="M1832 575.9L1838.8 569" stroke="#3a4048" stroke-width="1"/><path d="M1838.8 569L1845 562.8" stroke="#d05a20" stroke-width="1"/><path d="M1829 567.8L1834.8 562.6M1831.5 564L1835 568" stroke="#3a4048" stroke-width="0.9"/><path d="M1836.5 569L1833.5 568.5L1836 566Z" fill="#111"/><circle cx="1837" cy="597.7" r="7" fill="none" stroke="#e02020" stroke-width="1.2"/><circle cx="1837" cy="597.7" r="4.3" fill="none" stroke="#3a4048" stroke-width="1.3"/><path d="M1837 622.6L1830.6 634.4H1843.4Z" fill="none" stroke="#e02020" stroke-width="1.1" stroke-linejoin="round"/><circle cx="1837" cy="622.8" r="1.1" fill="#e02020"/><path d="M1833.6 656.8V654Q1833.6 651 1836.6 651Q1839.6 651 1839.6 654V656.8" stroke="#d05a20" stroke-width="1.2" fill="none"/><rect x="1831.2" y="656.6" width="10.8" height="8" rx="1" fill="#f2c4b0" stroke="#d05a20" stroke-width="1.1"/><path d="M1836.6 659.2V662.4" stroke="#d05a20" stroke-width="1"/><path d="M1830.1 691.5L1840.7 680.9" stroke="#3a4048" stroke-width="1"/><path d="M1833.2 694.6L1844.2 684" stroke="#d05a20" stroke-width="1"/><path d="M1834.5 720.8L1843.8 710.8" stroke="#3a4048" stroke-width="1"/><path d="M1830.1 717.7L1837 724.6" stroke="#d05a20" stroke-width="1"/><path d="M1837.6 741.4V750.2M1832 751.4H1841.2" stroke="#3a4048" stroke-width="1.1"/><path d="M1833 741.5L1835 743M1833 744L1835 745.5M1833 746.5L1835 748M1833 749L1835 750M1832.5 753H1841M1833 755.5L1835 753.2M1836 755.5L1838 753.2M1839 755.5L1841 753.2M1834.6 741V750" stroke="#e02020" stroke-width="0.9"/><circle cx="1835.1" cy="779.7" r="4.6" fill="none" stroke="#d05a20" stroke-width="1.1"/><path d="M1834.2 771.2L1843.8 780.7" stroke="#3a4048" stroke-width="1"/><path d="M1829 802.5Q1832 801 1834.5 803M1840.5 809Q1839 812 1840.5 815" stroke="#111" stroke-width="1.4" fill="none"/><path d="M1833.5 800.5L1844.5 810.5" stroke="#fff" stroke-width="2.4"/><path d="M1833.5 800.5L1844.5 810.5" stroke="#e02020" stroke-width="1"/><rect x="1837" y="804.2" width="3.6" height="3.6" fill="#e02020"/><path d="M1831 836.4H1843M1831 840.6H1843" stroke="#e02020" stroke-width="1.1"/><path d="M1834.5 862.5H1831.5V873.5H1834.5" stroke="#e02020" stroke-width="1.2" fill="none"/><path d="M1839.5 862.5H1842.5V873.5H1839.5" stroke="#3a4048" stroke-width="1.2" fill="none"/><path d="M1836.5 861V875" stroke="#e02020" stroke-width="1.2" stroke-dasharray="3.5 1.5"/></svg>
<div class="a" style="left:1700px;top:168px;width:1px;height:1px;background:#111"></div><div class="a" style="left:4px;top:885px;width:1px;height:1px;background:#111"></div><div class="a" style="left:303px;top:885px;width:1px;height:1px;background:#111"></div>
<div class="a nav" style="left:828px;width:146px"></div>
<div class="a nav" style="left:981px;width:111px"></div>
<svg class="a" style="left:0;top:0" width="1920" height="914"><path d="M834.8 892.6Q831.6 895.6 834.8 898.4M842 891.2Q842 888.3 839.3 888.3Q836.4 888.3 836.4 896Q836.4 903.6 839.3 903.6Q841.4 903.6 842.4 900.6M843.4 892.8Q848 893.4 848 895.9Q848 898.6 843 898.6H838.4" stroke="#333" stroke-width="1.1" fill="none"/><path d="M840.2 891.4H843.4M841.8 889.9V893M843 893.6H846.2M844.6 892V895.2" stroke="#222" stroke-width="1"/><path d="M839.5 893.2L840.3 894.9L842 895.6L840.3 896.3L839.5 898L838.7 896.3L837 895.6L838.7 894.9Z" fill="#1a80f0"/><path d="M854.5 894.4H861L857.75 898.2Z" fill="#333"/><path d="M868.2 893.2L872.6 888.4L874.5 891.2L878.5 889.8Q880 889.5 880 891V893.2Z" fill="#c8ccd4" stroke="#333" stroke-width="0.9" stroke-linejoin="round"/><rect x="867.5" y="893.6" width="15" height="10" rx="1.2" fill="#fafafa" stroke="#333" stroke-width="1.2"/><rect x="870.6" y="896.4" width="9" height="4.2" fill="#b8c0d0" stroke="#333" stroke-width="1"/><path d="M898.5 903.6L893 898Q891.6 896.5 892.9 895.8Q894 895.2 895.5 896.8L896.5 897.8V890.6Q896.5 889.3 897.6 889.3Q898.6 889.3 898.6 890.6V889.6Q898.6 888.2 899.9 888.2Q901.2 888.2 901.2 889.6V890.6Q901.2 889.3 902.4 889.3Q903.6 889.3 903.6 890.6V892.3Q903.6 891 904.7 891Q905.8 891 905.8 892.3V899Q905.8 901.6 904 903.6Z" fill="#f6f6f8" stroke="#222" stroke-width="1" stroke-linejoin="round"/><path d="M898.6 891V895.5M901.2 890.5V895.5M903.6 891.5V896" stroke="#333" stroke-width="0.8"/><circle cx="921.6" cy="894.7" r="4.3" fill="#e2f2f4" stroke="#222" stroke-width="1.2"/><path d="M924.8 898L928.8 902" stroke="#333" stroke-width="2.4" stroke-linecap="round"/><path d="M928.3 890.5H932.7M930.5 888.3V892.7M928.3 894.5H932.7" stroke="#222" stroke-width="1"/><rect x="942.5" y="888.5" width="15" height="15" fill="none" stroke="#333" stroke-width="0.9" stroke-dasharray="1.8 2"/><circle cx="948.4" cy="894.5" r="5.9" fill="#e2f2f4" stroke="#222" stroke-width="1.3"/><path d="M952.6 899L956.8 903.2" stroke="#333" stroke-width="2.6" stroke-linecap="round"/><path d="M964.5 894.5H970.5L967.5 898Z" fill="#333"/><rect x="985.3" y="888.3" width="15.4" height="12.2" rx="1.2" fill="#fafafa" stroke="#222" stroke-width="1"/><rect x="987.6" y="890.4" width="10.8" height="8" rx="1" fill="url(#gblue)" stroke="#1a3468" stroke-width="1"/><path d="M990 900.8H996L996.8 903.2H989.2Z" fill="#fafafa" stroke="#222" stroke-width="0.9" stroke-linejoin="round"/><path d="M1004 894.4H1010.5L1007.25 898.2Z" fill="#333"/><rect x="1022.2" y="888.4" width="15.6" height="15.4" rx="1" fill="url(#gdk)" stroke="#333" stroke-width="1"/><rect x="1023.4" y="889.6" width="2.2" height="2.2" fill="#fff" fill-opacity="1.00"/><rect x="1023.4" y="892.6" width="2.2" height="2.2" fill="#fff" fill-opacity="0.92"/><rect x="1023.4" y="895.6" width="2.2" height="2.2" fill="#fff" fill-opacity="0.84"/><rect x="1023.4" y="898.6" width="2.2" height="2.2" fill="#fff" fill-opacity="0.76"/><rect x="1023.4" y="901.6" width="2.2" height="2.2" fill="#fff" fill-opacity="0.68"/><rect x="1026.4" y="889.6" width="2.2" height="2.2" fill="#fff" fill-opacity="1.00"/><rect x="1026.4" y="892.6" width="2.2" height="2.2" fill="#fff" fill-opacity="0.92"/><rect x="1026.4" y="895.6" width="2.2" height="2.2" fill="#fff" fill-opacity="0.84"/><rect x="1026.4" y="898.6" width="2.2" height="2.2" fill="#fff" fill-opacity="0.76"/><rect x="1026.4" y="901.6" width="2.2" height="2.2" fill="#fff" fill-opacity="0.68"/><rect x="1029.4" y="889.6" width="2.2" height="2.2" fill="#fff" fill-opacity="1.00"/><rect x="1029.4" y="892.6" width="2.2" height="2.2" fill="#fff" fill-opacity="0.92"/><rect x="1029.4" y="895.6" width="2.2" height="2.2" fill="#fff" fill-opacity="0.84"/><rect x="1029.4" y="898.6" width="2.2" height="2.2" fill="#fff" fill-opacity="0.76"/><rect x="1029.4" y="901.6" width="2.2" height="2.2" fill="#fff" fill-opacity="0.68"/><rect x="1032.4" y="889.6" width="2.2" height="2.2" fill="#fff" fill-opacity="1.00"/><rect x="1032.4" y="892.6" width="2.2" height="2.2" fill="#fff" fill-opacity="0.92"/><rect x="1032.4" y="895.6" width="2.2" height="2.2" fill="#fff" fill-opacity="0.84"/><rect x="1032.4" y="898.6" width="2.2" height="2.2" fill="#fff" fill-opacity="0.76"/><rect x="1032.4" y="901.6" width="2.2" height="2.2" fill="#fff" fill-opacity="0.68"/><rect x="1035.4" y="889.6" width="2.2" height="2.2" fill="#fff" fill-opacity="1.00"/><rect x="1035.4" y="892.6" width="2.2" height="2.2" fill="#fff" fill-opacity="0.92"/><rect x="1035.4" y="895.6" width="2.2" height="2.2" fill="#fff" fill-opacity="0.84"/><rect x="1035.4" y="898.6" width="2.2" height="2.2" fill="#fff" fill-opacity="0.76"/><rect x="1035.4" y="901.6" width="2.2" height="2.2" fill="#fff" fill-opacity="0.68"/><path d="M1041 894.4H1047.5L1044.25 898.2Z" fill="#333"/><rect x="1059.6" y="889.2" width="7" height="6.4" rx="1.2" fill="#b4cdec" stroke="#1a3468" stroke-width="1.1"/><rect x="1061.8" y="891.4000000000001" width="2.6" height="2" fill="#8eaedc"/><rect x="1066.8" y="889.2" width="7" height="6.4" rx="1.2" fill="#b4cdec" stroke="#1a3468" stroke-width="1.1"/><rect x="1069.0" y="891.4000000000001" width="2.6" height="2" fill="#8eaedc"/><rect x="1059.6" y="895.8" width="7" height="6.4" rx="1.2" fill="#b4cdec" stroke="#1a3468" stroke-width="1.1"/><rect x="1061.8" y="898.0" width="2.6" height="2" fill="#8eaedc"/><rect x="1066.8" y="895.8" width="7" height="6.4" rx="1.2" fill="#b4cdec" stroke="#1a3468" stroke-width="1.1"/><rect x="1069.0" y="898.0" width="2.6" height="2" fill="#8eaedc"/><path d="M1078 894.4H1084.5L1081.25 898.2Z" fill="#333"/></svg>
<div class="a" style="left:1830px;top:37px;width:53px;height:53px;border:1px solid #8c8c8c;background:rgba(236,236,236,0.55)"></div>
<div class="a" style="left:1840px;top:47px;width:33px;height:33px;background:#dcdde0"></div>
<div class="a" style="left:1837px;top:55.5px;width:40px;text-align:center;font-size:15px;font-weight:bold;color:#888c92;line-height:16px;transform:scaleX(0.72);transform-origin:50% 0">TOP</div>
<svg class="a" style="left:1815px;top:25px" width="90" height="85">
<path d="M9.5 4.5L13 10L16.5 4.5M13 10V14.5" stroke="#7ef07a" stroke-width="1.4" fill="none"/>
<path d="M68 17H71" stroke="#ff6a6a" stroke-width="1.3"/>
<path d="M72.8 11.8L78.8 21.8M78.8 11.8L72.8 21.8" stroke="#ff6a6a" stroke-width="1.3" fill="none"/>
<path d="M16.5 68.2H23.2L16.5 77.4H23.6M20 65V67.5" stroke="#6e6eff" stroke-width="1.3" fill="none"/>
</svg>

</body></html>
